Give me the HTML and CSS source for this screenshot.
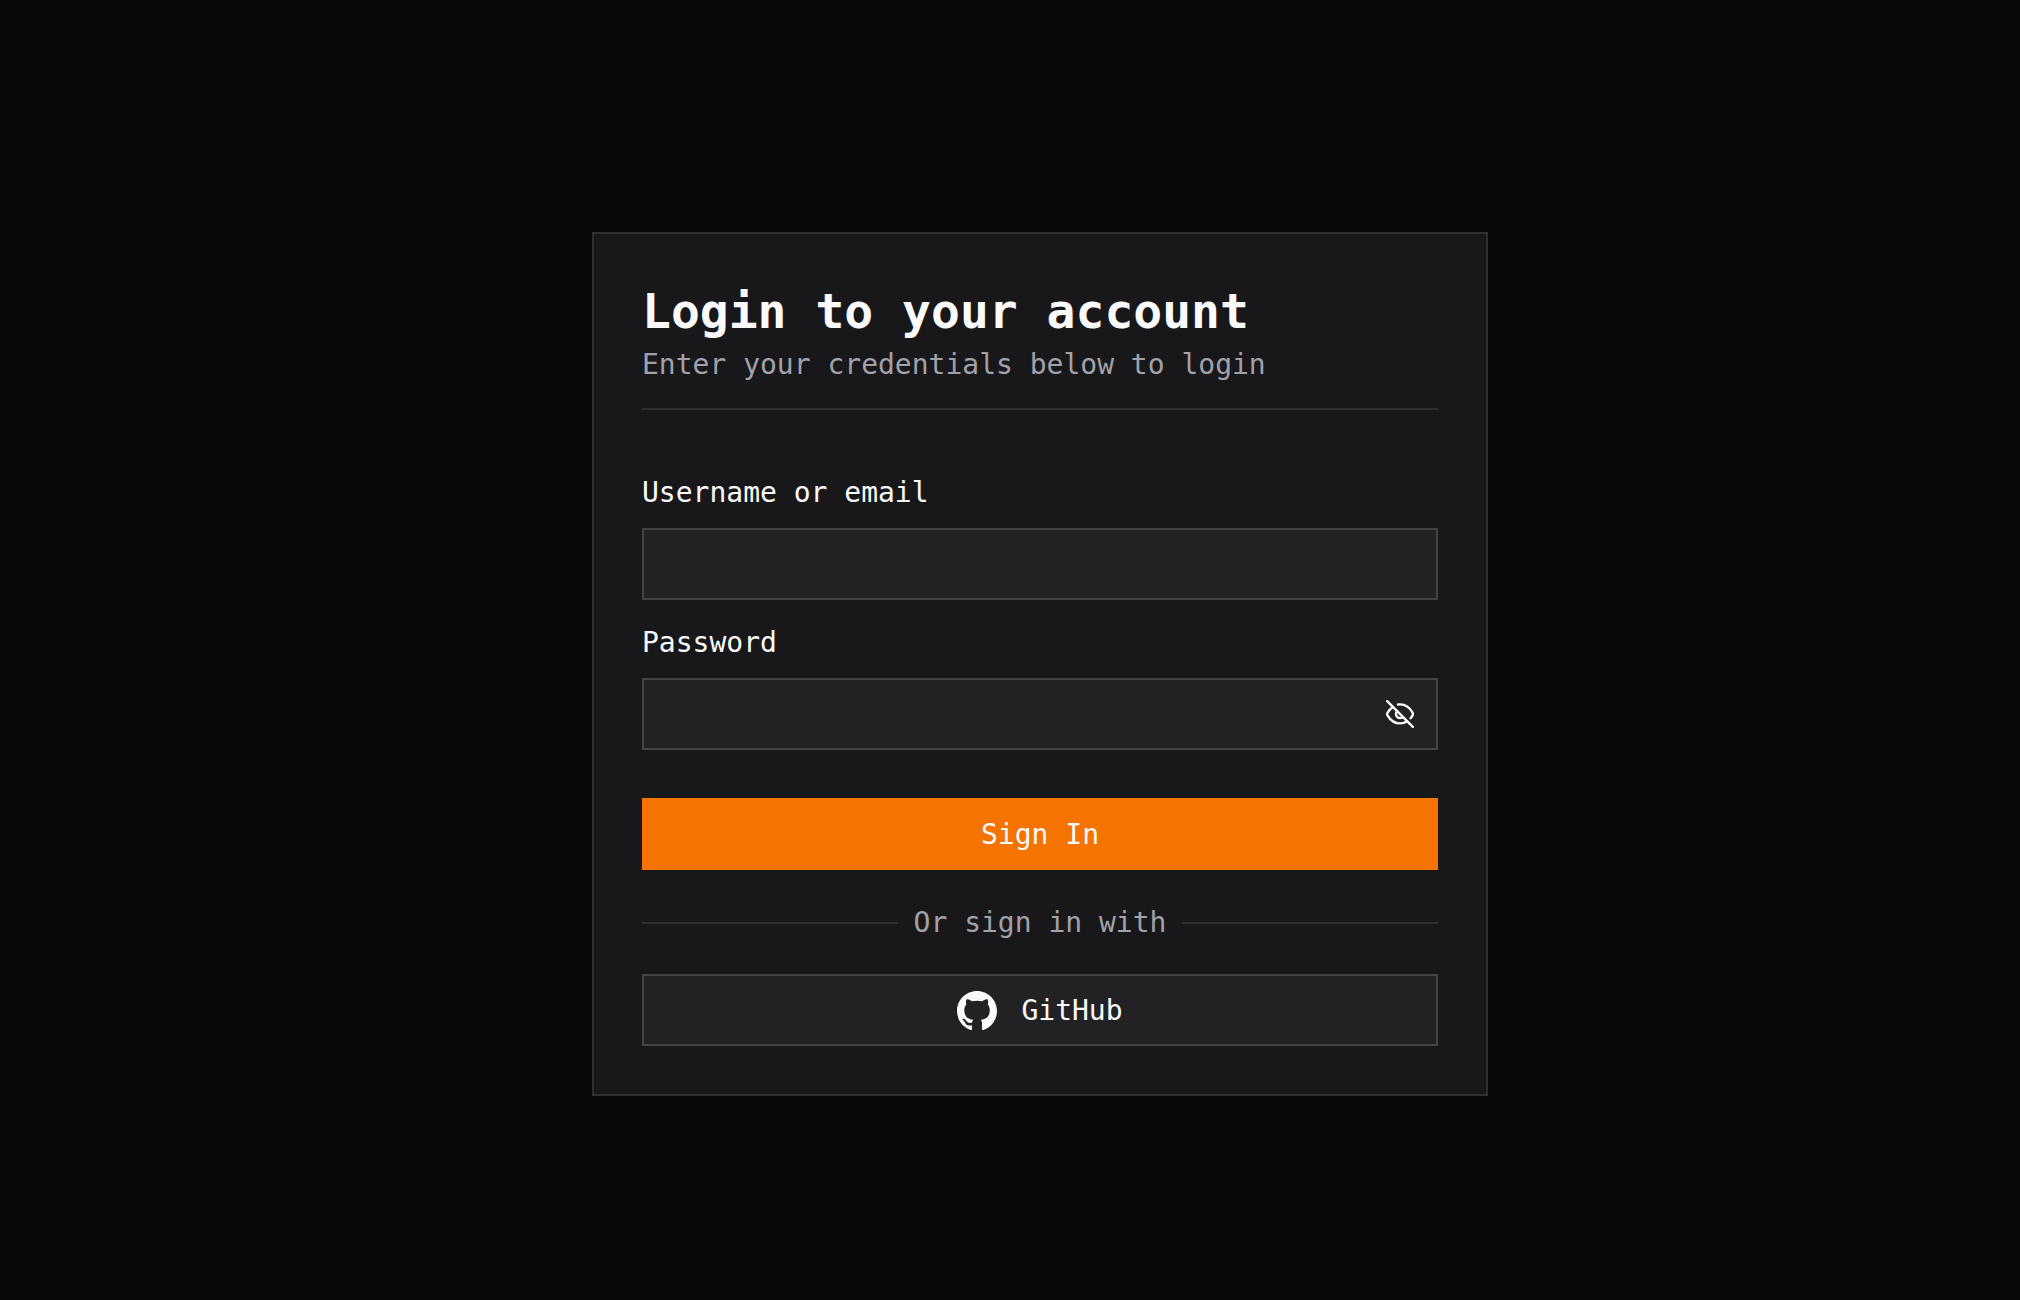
FILE: index.html
```html
<!DOCTYPE html>
<html lang="en">

<head>
	<meta charset="UTF-8">
	<meta name="viewport" content="width=device-width, initial-scale=1.0">
	<title>Login</title>
	<link rel="stylesheet" href="styles.css">
</head>

<body>
	<main class="page">
		<form class="card">
			<header class="card-header">
				<h1>Login to your account</h1>
				<p>Enter your credentials below to login</p>
			</header>

			<div class="fields">
				<div class="field">
					<label for="username">Username or email</label>
					<input id="username" class="control" type="text" autocomplete="username">
				</div>
				<div class="field">
					<label for="password">Password</label>
					<div class="control password">
						<input id="password" type="password" autocomplete="current-password">
						<button id="togglePassword" class="toggle" type="button" aria-label="Show password">
							<svg viewBox="0 0 28 28" fill="none" stroke="currentColor" stroke-width="2.4" stroke-linecap="round" stroke-linejoin="round">
								<path d="M1.200 1.200 26.800 26.800" />
								<path d="M12 4.500C18 3.700 23.400 7 26.500 12.500C27 13.500 27 14.500 26.500 15.500C26 16.500 25.400 17.400 24.600 18.200" />
								<path d="M7 7C4.600 8.600 2.700 10.500 1.500 12.700C1.100 13.500 1.100 14.500 1.500 15.300C4.600 20.500 9 23.400 14 23.400C16.500 23.400 19 22.800 21 21.500" />
								<path d="M11.200 11.200C9.600 12.800 9.600 15.200 11.200 16.800C12.800 18.400 15.200 18.400 16.800 16.800" />
							</svg>
						</button>
					</div>
				</div>
			</div>

			<button class="submit" type="submit">Sign In</button>

			<div class="divider"><span>Or sign in with</span></div>

			<button class="control github" type="button">
				<svg viewBox="0 0 16 16" fill="currentColor" aria-hidden="true">
					<path d="M8 0C3.580 0 0 3.580 0 8c0 3.540 2.290 6.530 5.470 7.590.4.070.55-.17.55-.38 0-.19-.01-.82-.01-1.490-2.010.37-2.530-.49-2.690-.94-.09-.23-.48-.94-.82-1.130-.28-.15-.68-.52-.01-.53.63-.01 1.080.58 1.230.82.72 1.210 1.870.87 2.330.66.070-.52.28-.87.51-1.070-1.780-.2-3.640-.89-3.640-3.950 0-.87.31-1.590.82-2.150-.08-.2-.36-1.020.08-2.120 0 0 .67-.21 2.200.82.64-.18 1.320-.27 2-.27s1.360.09 2 .27c1.530-1.040 2.200-.82 2.200-.82.44 1.100.16 1.920.08 2.120.51.56.82 1.270.82 2.150 0 3.070-1.870 3.750-3.650 3.950.29.25.54.73.54 1.480 0 1.070-.01 1.930-.01 2.200 0 .21.15.46.55.38A8.010 8.010 0 0 0 16 8c0-4.420-3.580-8-8-8z" />
				</svg>
				GitHub
			</button>
		</form>
	</main>

	<script>
		const passwordDom = document.getElementById('password');
		const toggleDom = document.getElementById('togglePassword');

		// show or hide the password
		toggleDom.addEventListener('click', function () {
			const hidden = passwordDom.type === 'password';
			passwordDom.type = hidden ? 'text' : 'password';
			toggleDom.setAttribute('aria-label', hidden ? 'Hide password' : 'Show password');
		});
	</script>
</body>

</html>
```
FILE: styles.css
```css
* {
	margin: 0;
	padding: 0;
	box-sizing: border-box;
}

body {
	font-family: "DejaVu Sans Mono", monospace;
	font-size: 28px;
	line-height: 42px;
	color: #fafafa;
	background: #09090b;
}

input,
button {
	font: inherit;
	color: inherit;
	border: none;
	border-radius: 0;
	background: none;
}

button {
	cursor: pointer;
}

.page {
	display: flex;
	align-items: center;
	justify-content: center;
	min-height: 100vh;
	padding: 28px 0 0 60px;
}

.card {
	width: 100%;
	max-width: 896px;
	padding: 48px;
	border: 2px solid #2f2f31;
	background: #18181a;
}

.card-header {
	padding-bottom: 22px;
	border-bottom: 2px solid #2f2f31;
}

.card-header h1 {
	margin-bottom: 4px;
	font-size: 48px;
	line-height: 58px;
}

.card-header p {
	color: #a1a1aa;
}

.fields {
	display: grid;
	gap: 22px;
	margin: 62px 0 48px;
}

.field {
	display: grid;
	gap: 14px;
}

.control {
	width: 100%;
	height: 72px;
	border: 2px solid #434345;
	background: #222224;
}

input {
	min-width: 0;
	padding: 0 22px;
	outline: none;
}

.control:focus,
.control:focus-within {
	border-color: #f57300;
}

.password {
	display: flex;
	align-items: center;
}

.password input {
	flex: 1;
	height: 100%;
}

.toggle {
	display: flex;
	padding: 22px;
}

.toggle svg {
	width: 28px;
	height: 28px;
}

.submit {
	display: block;
	width: 100%;
	height: 72px;
	padding-top: 2px;
	background: #f57300;
}

.divider {
	display: flex;
	align-items: center;
	gap: 16px;
	margin: 32px 0 30px;
	color: #a1a1aa;
}

.divider::before,
.divider::after {
	content: "";
	flex: 1;
	height: 2px;
	background: #2f2f31;
}

.github {
	display: flex;
	align-items: center;
	justify-content: center;
	gap: 24px;
	padding-top: 2px;
}

.github svg {
	width: 40px;
	height: 40px;
}
```
